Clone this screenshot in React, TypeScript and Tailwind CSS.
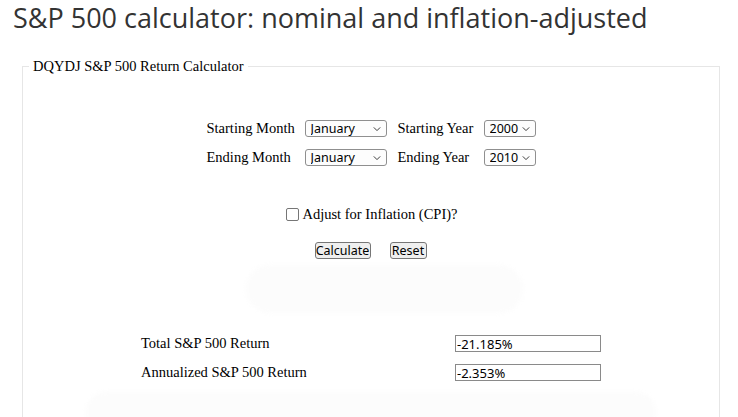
import { useState } from 'react'

const MONTHS = [
  'January', 'February', 'March', 'April', 'May', 'June',
  'July', 'August', 'September', 'October', 'November', 'December',
]

const YEARS = Array.from({ length: 2024 - 1871 + 1 }, (_, i) => String(1871 + i))

function Chevron() {
  return (
    <svg viewBox="0 0 10 6" className="pointer-events-none absolute right-[6px] top-1/2 h-[5px] w-[8px] -translate-y-1/2">
      <path d="M1 1l4 4 4-4" fill="none" stroke="#333" strokeWidth="1.2" />
    </svg>
  )
}

function Select({ value, options, onChange, width }: { value: string; options: string[]; onChange: (v: string) => void; width: string }) {
  return (
    <div className={`relative h-[17px] ${width}`}>
      <select
        value={value}
        onChange={(e) => onChange(e.target.value)}
        className="h-full w-full appearance-none rounded-[3px] border border-[#8f8f8f] bg-[#fdfdfd] pl-[5px] text-[12.5px] leading-[15px] text-black outline-none"
        style={{ fontFamily: '"Noto Sans", "Open Sans", sans-serif' }}
      >
        {options.map((o) => (
          <option key={o} value={o}>
            {o}
          </option>
        ))}
      </select>
      <Chevron />
    </div>
  )
}

export default function App() {
  const [startMonth, setStartMonth] = useState('January')
  const [startYear, setStartYear] = useState('2000')
  const [endMonth, setEndMonth] = useState('January')
  const [endYear, setEndYear] = useState('2010')
  const [cpi, setCpi] = useState(false)

  const sans = { fontFamily: '"Noto Sans", "Open Sans", sans-serif' }

  return (
    <div className="h-[417px] overflow-hidden bg-white" style={{ fontFamily: '"Liberation Serif", serif' }}>
      <h1
        className="pl-[13px] pt-[1px] text-[27px] leading-[34px] text-[#333]"
        style={{ fontFamily: '"Open Sans", sans-serif' }}
      >
        S&amp;P 500 calculator: nominal and inflation-adjusted
      </h1>

      <fieldset className="mx-[22px] mt-[23px] w-[698px] border border-[#e6e6e6] pb-[40px]">
        <legend className="ml-[6px] px-[4px] text-[14.5px] leading-[16px] text-black">DQYDJ S&amp;P 500 Return Calculator</legend>

        <div className="mt-[46px] flex justify-center">
          <div className="grid grid-cols-[98px_93px_86px_52px] items-center gap-y-[12px] text-[14.5px] leading-[17px] text-black">
            <span>Starting Month</span>
            <Select value={startMonth} options={MONTHS} onChange={setStartMonth} width="w-[82px]" />
            <span>Starting Year</span>
            <Select value={startYear} options={YEARS} onChange={setStartYear} width="w-[52px]" />
            <span>Ending Month</span>
            <Select value={endMonth} options={MONTHS} onChange={setEndMonth} width="w-[82px]" />
            <span>Ending Year</span>
            <Select value={endYear} options={YEARS} onChange={setEndYear} width="w-[52px]" />
          </div>
        </div>

        <label className="mt-[40px] flex items-center justify-center pl-[2px] text-[14.5px] leading-[17px] text-black">
          <input
            type="checkbox"
            checked={cpi}
            onChange={(e) => setCpi(e.target.checked)}
            className="mr-[3px] h-[13px] w-[13px] appearance-none rounded-[2px] border border-[#767676] bg-white"
          />
          Adjust for Inflation (CPI)?
        </label>

        <div className="mt-[19px] flex justify-center gap-[19px] pr-[1px]" style={sans}>
          <button
            type="button"
            className="h-[17px] w-[56px] rounded-[3px] border border-[#767676] bg-[#efefef] text-[12.5px] leading-[15px] text-black"
          >
            Calculate
          </button>
          <button
            type="button"
            className="h-[17px] w-[37px] rounded-[3px] border border-[#767676] bg-[#efefef] text-[12.5px] leading-[15px] text-black"
          >
            Reset
          </button>
        </div>

        <div className="ml-[223px] mt-[6px] h-[48px] w-[277px] rounded-[24px] bg-[#fcfcfc] blur-[2px]" />

        <div className="mt-[22px] flex flex-col gap-[12px] pl-[118px] text-[14.5px] leading-[17px] text-black">
          <div className="flex items-center">
            <span className="w-[314px]">Total S&amp;P 500 Return</span>
            <input
              readOnly
              value="-21.185%"
              className="h-[17px] w-[146px] border border-[#8a8a8a] px-[1px] text-[13px] leading-[15px] text-black outline-none"
              style={sans}
            />
          </div>
          <div className="flex items-center">
            <span className="w-[314px]">Annualized S&amp;P 500 Return</span>
            <input
              readOnly
              value="-2.353%"
              className="h-[17px] w-[146px] border border-[#8a8a8a] px-[1px] text-[13px] leading-[15px] text-black outline-none"
              style={sans}
            />
          </div>
        </div>

        <div className="mx-auto mt-[11px] h-[40px] w-[570px] rounded-[20px] bg-[#fcfcfc] blur-[2px]" />
      </fieldset>
    </div>
  )
}
